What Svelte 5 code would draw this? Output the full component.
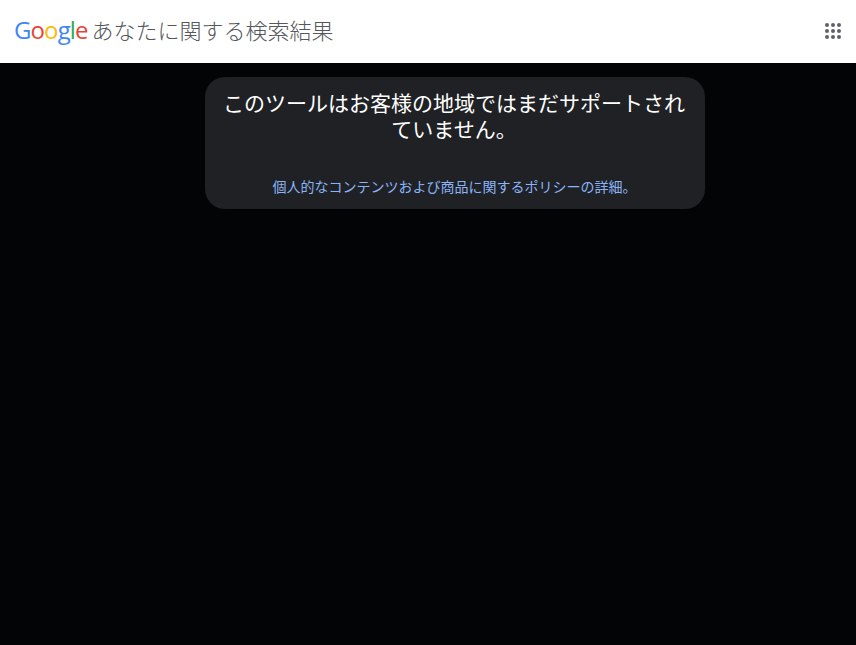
<script>
  const logo = [
    ['G', 'blue'],
    ['o', 'red'],
    ['o', 'yellow'],
    ['g', 'blue'],
    ['l', 'green'],
    ['e', 'red']
  ]
</script>

<div class="page">
  <header class="topbar">
    <div class="brand">
      <span class="logo">
        {#each logo as letter}
          <span class={letter[1]}>{letter[0]}</span>
        {/each}
      </span>
      <span class="title">あなたに関する検索結果</span>
    </div>
    <button class="apps" aria-label="Google アプリ">
      <svg width="16" height="16" viewBox="0 0 16 16" fill="#5f6368">
        <circle cx="2" cy="2" r="2" />
        <circle cx="8" cy="2" r="2" />
        <circle cx="14" cy="2" r="2" />
        <circle cx="2" cy="8" r="2" />
        <circle cx="8" cy="8" r="2" />
        <circle cx="14" cy="8" r="2" />
        <circle cx="2" cy="14" r="2" />
        <circle cx="8" cy="14" r="2" />
        <circle cx="14" cy="14" r="2" />
      </svg>
    </button>
  </header>

  <main class="content">
    <section class="card">
      <h1>このツールはお客様の地域ではまだサポートされていません。</h1>
      <a href="#policy">個人的なコンテンツおよび商品に関するポリシーの詳細。</a>
    </section>
  </main>
</div>

<style>
  :global(body) {
    background: #030406;
    font-family: "Noto Sans CJK JP", "Liberation Sans", sans-serif;
  }

  .page {
    display: flex;
    flex-direction: column;
    height: 645px;
    overflow: hidden;
  }

  .topbar {
    display: flex;
    justify-content: space-between;
    align-items: center;
    box-sizing: border-box;
    height: 63px;
    padding: 0 15px 2px 14px;
    background: #fff;
  }

  .brand {
    display: flex;
    align-items: center;
    gap: 4px;
    margin-bottom: 2px;
  }

  .logo {
    display: flex;
    font-family: "Open Sans", sans-serif;
    font-size: 24px;
    font-weight: 500;
    letter-spacing: -0.9px;
    line-height: 30px;
  }

  .blue { color: #4285f4; }
  .red { color: #ea4335; }
  .yellow { color: #fbbc05; }
  .green { color: #34a853; }

  .title {
    margin-bottom: 2px;
    color: #54585c;
    font-size: 22px;
    font-weight: 300;
    line-height: 30px;
  }

  .apps {
    display: flex;
    padding: 0;
    border: none;
    background: transparent;
    cursor: pointer;
  }

  .content {
    flex: 1;
    padding: 14px 0 0 205px;
  }

  .card {
    display: flex;
    flex-direction: column;
    align-items: center;
    box-sizing: border-box;
    width: 500px;
    height: 132px;
    padding: 12px 20px 0 18px;
    border-radius: 20px;
    background: #202124;
  }

  h1 {
    margin: 0 0 35px;
    color: #fff;
    font-size: 21px;
    font-weight: 400;
    line-height: 26px;
    text-align: center;
  }

  a {
    margin-left: 1px;
    color: #8ab4f8;
    font-size: 14px;
    line-height: 20px;
    text-decoration: none;
  }
</style>
